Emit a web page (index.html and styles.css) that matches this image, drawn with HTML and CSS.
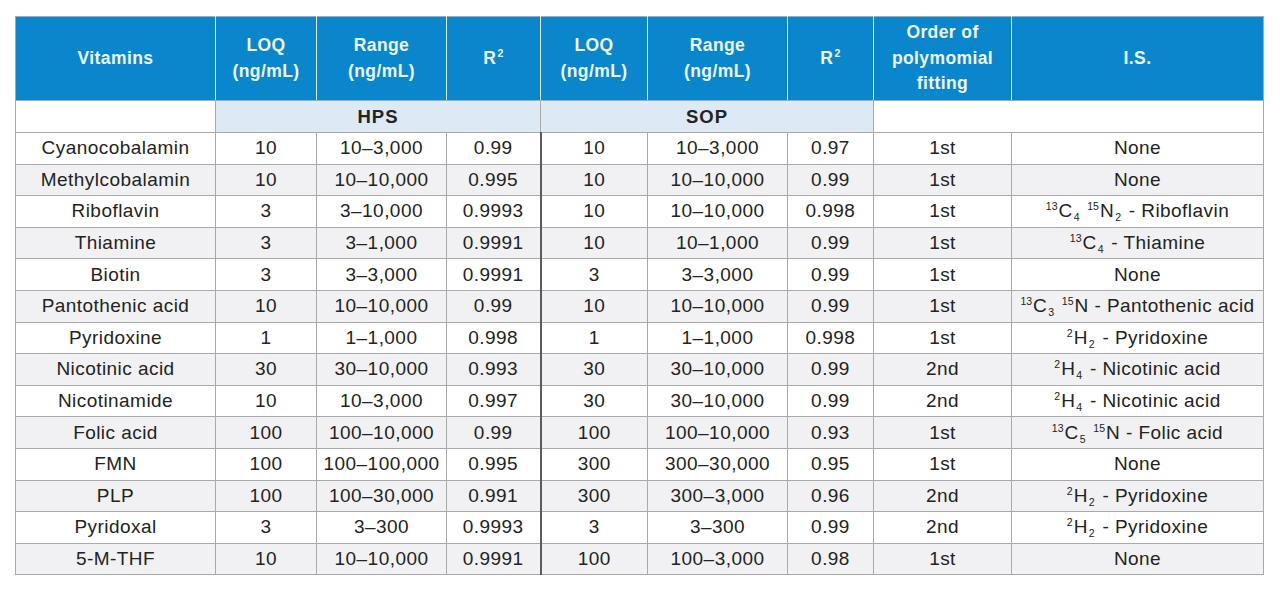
FILE: index.html
```html
<!DOCTYPE html>
<html lang="en">
<head>
<meta charset="utf-8">
<title>Vitamins calibration</title>
<link rel="stylesheet" href="styles.css">
</head>
<body>
<table class="vt">
  <colgroup>
    <col class="w-name"><col class="w-loq"><col class="w-range"><col class="w-r2">
    <col class="w-loq2"><col class="w-range2"><col class="w-r22"><col class="w-order"><col class="w-is">
  </colgroup>
  <thead>
    <tr class="head">
      <th>Vitamins</th>
      <th>LOQ<br>(ng/mL)</th>
      <th>Range<br>(ng/mL)</th>
      <th>R<sup>2</sup></th>
      <th class="sep">LOQ<br>(ng/mL)</th>
      <th>Range<br>(ng/mL)</th>
      <th>R<sup>2</sup></th>
      <th>Order of<br>polymomial<br>fitting</th>
      <th>I.S.</th>
    </tr>
    <tr class="group">
      <td class="blank"></td>
      <td class="grp" colspan="3">HPS</td>
      <td class="grp sep" colspan="3">SOP</td>
      <td class="blank" colspan="2"></td>
    </tr>
  </thead>
  <tbody>
    <tr><td>Cyanocobalamin</td><td>10</td><td>10–3,000</td><td>0.99</td><td class="sep">10</td><td>10–3,000</td><td>0.97</td><td>1st</td><td>None</td></tr>
    <tr><td>Methylcobalamin</td><td>10</td><td>10–10,000</td><td>0.995</td><td class="sep">10</td><td>10–10,000</td><td>0.99</td><td>1st</td><td>None</td></tr>
    <tr><td>Riboflavin</td><td>3</td><td>3–10,000</td><td>0.9993</td><td class="sep">10</td><td>10–10,000</td><td>0.998</td><td>1st</td><td><sup>13</sup>C<sub>4</sub> <sup>15</sup>N<sub>2</sub> - Riboflavin</td></tr>
    <tr><td>Thiamine</td><td>3</td><td>3–1,000</td><td>0.9991</td><td class="sep">10</td><td>10–1,000</td><td>0.99</td><td>1st</td><td><sup>13</sup>C<sub>4</sub> - Thiamine</td></tr>
    <tr><td>Biotin</td><td>3</td><td>3–3,000</td><td>0.9991</td><td class="sep">3</td><td>3–3,000</td><td>0.99</td><td>1st</td><td>None</td></tr>
    <tr><td>Pantothenic acid</td><td>10</td><td>10–10,000</td><td>0.99</td><td class="sep">10</td><td>10–10,000</td><td>0.99</td><td>1st</td><td><sup>13</sup>C<sub>3</sub> <sup>15</sup>N - Pantothenic acid</td></tr>
    <tr><td>Pyridoxine</td><td>1</td><td>1–1,000</td><td>0.998</td><td class="sep">1</td><td>1–1,000</td><td>0.998</td><td>1st</td><td><sup>2</sup>H<sub>2</sub> - Pyridoxine</td></tr>
    <tr><td>Nicotinic acid</td><td>30</td><td>30–10,000</td><td>0.993</td><td class="sep">30</td><td>30–10,000</td><td>0.99</td><td>2nd</td><td><sup>2</sup>H<sub>4</sub> - Nicotinic acid</td></tr>
    <tr><td>Nicotinamide</td><td>10</td><td>10–3,000</td><td>0.997</td><td class="sep">30</td><td>30–10,000</td><td>0.99</td><td>2nd</td><td><sup>2</sup>H<sub>4</sub> - Nicotinic acid</td></tr>
    <tr><td>Folic acid</td><td>100</td><td>100–10,000</td><td>0.99</td><td class="sep">100</td><td>100–10,000</td><td>0.93</td><td>1st</td><td><sup>13</sup>C<sub>5</sub> <sup>15</sup>N - Folic acid</td></tr>
    <tr><td>FMN</td><td>100</td><td>100–100,000</td><td>0.995</td><td class="sep">300</td><td>300–30,000</td><td>0.95</td><td>1st</td><td>None</td></tr>
    <tr><td>PLP</td><td>100</td><td>100–30,000</td><td>0.991</td><td class="sep">300</td><td>300–3,000</td><td>0.96</td><td>2nd</td><td><sup>2</sup>H<sub>2</sub> - Pyridoxine</td></tr>
    <tr><td>Pyridoxal</td><td>3</td><td>3–300</td><td>0.9993</td><td class="sep">3</td><td>3–300</td><td>0.99</td><td>2nd</td><td><sup>2</sup>H<sub>2</sub> - Pyridoxine</td></tr>
    <tr><td>5-M-THF</td><td>10</td><td>10–10,000</td><td>0.9991</td><td class="sep">100</td><td>100–3,000</td><td>0.98</td><td>1st</td><td>None</td></tr>
  </tbody>
</table>
</body>
</html>
```

FILE: styles.css
```css
html, body {
  margin: 0;
  padding: 0;
  background: #ffffff;
}
body {
  padding: 16px 0 0 15px;
  font-family: "Liberation Sans", Arial, sans-serif;
  color: #232323;
}
.vt {
  border-collapse: collapse;
  table-layout: fixed;
  width: 1249px;
  border: 1px solid #a9a9a9;
}
.w-name { width: 200px; }
.w-loq { width: 101px; }
.w-range { width: 130px; }
.w-r2 { width: 94px; }
.w-loq2 { width: 107px; }
.w-range2 { width: 140px; }
.w-r22 { width: 86px; }
.w-order { width: 138px; }
.w-is { width: 252px; }

.head th {
  height: 83px;
  padding: 0;
  background: #0a86cd;
  color: #eef6fc;
  font-size: 17.5px;
  font-weight: bold;
  line-height: 25.5px;
  letter-spacing: 0.4px;
  text-align: center;
  vertical-align: middle;
  border-left: 1px solid #dcebf6;
  border-bottom: 1px solid #a9a9a9;
}
.head th:first-child { border-left: none; }
.head sup {
  font-size: 10.5px;
  vertical-align: 7px;
  line-height: 0;
  margin-left: 1px;
}
.group td {
  height: 31px;
  padding: 0;
  border: 1px solid #a9a9a9;
  background: #ffffff;
}
.group .grp {
  background: #dde9f5;
  text-align: center;
  font-weight: bold;
  font-size: 18.5px;
  letter-spacing: 1px;
  color: #232323;
}
.group .grp.sep { border-left: 1px solid #a9a9a9; }

tbody td {
  height: 30.6px;
  padding: 0;
  text-align: center;
  vertical-align: middle;
  font-size: 19px;
  letter-spacing: 0.45px;
  border: 1px solid #a9a9a9;
  white-space: nowrap;
}
tbody td.sep { border-left: 2px solid #5b5b5b; }
tbody tr:nth-child(even) td { background: #f1f1f3; }
tbody tr:nth-child(odd) td { background: #ffffff; }

tbody sup, tbody sub {
  font-size: 10.5px;
  line-height: 0;
  letter-spacing: 0;
}
tbody sup { vertical-align: 7px; margin-right: 1px; }
tbody sub { vertical-align: -4px; margin-left: 1px; margin-right: 2px; }
```
